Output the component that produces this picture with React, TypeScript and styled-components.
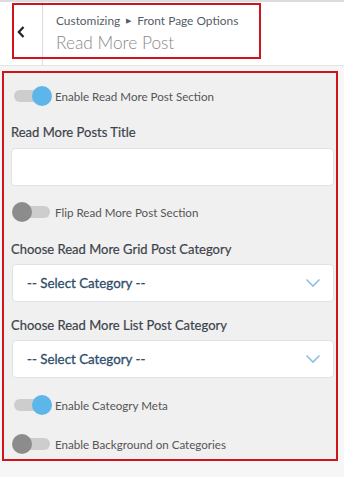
import styled, { createGlobalStyle } from 'styled-components';

const GlobalStyle = createGlobalStyle`
  html, body {
    margin: 0;
    padding: 0;
    background: #f6f6f6;
    font-family: Lato, "Open Sans", sans-serif;
  }
  * { box-sizing: border-box; }
`;

const Page = styled.div`
  width: 344px;
  height: 477px;
  border-top: 2px solid #dcdcde;
  overflow: hidden;
`;

const Header = styled.header`
  position: relative;
  display: flex;
  height: 64px;
  background: #fff;
  border-bottom: 1px solid #e4e4e4;
`;

const BackCell = styled.div`
  width: 43px;
  display: flex;
  align-items: center;
  justify-content: center;
  border-right: 1px solid #dcdcde;
  padding-bottom: 4px;
`;

const TitleBox = styled.div`
  padding: 9px 0 0 13px;
`;

const Crumb = styled.div`
  font-size: 11.9px;
  color: #555d66;
  line-height: 18px;
`;

const Sep = styled.span`
  font-size: 7px;
  margin: 0 6px;
  vertical-align: 2px;
`;

const Title = styled.div`
  font-size: 17.3px;
  font-weight: 300;
  color: #8a8a8a;
  line-height: 26px;
`;

const Highlight = styled.div`
  position: absolute;
  left: 12px;
  top: 1px;
  width: 249px;
  height: 56px;
  border: 2px solid #d0141b;
  pointer-events: none;
`;

const Panel = styled.section`
  margin: 5px 0 0 2px;
  width: 336px;
  height: 390px;
  border: 2px solid #d0141b;
  background: #f0f0f0;
  padding: 11px 2px 0 7px;
  display: flex;
  flex-direction: column;
`;

const ToggleRow = styled.div<{ $mt?: number }>`
  display: flex;
  align-items: center;
  height: 24px;
  margin-top: ${p => p.$mt ?? 0}px;
`;

const Switch = styled.div`
  position: relative;
  width: 42px;
  height: 24px;
  flex-shrink: 0;
`;

const Track = styled.div`
  position: absolute;
  left: 3px;
  top: 6px;
  width: 36px;
  height: 12px;
  border-radius: 6px;
  background: #cdcdcd;
`;

const Knob = styled.div<{ $on: boolean }>`
  position: absolute;
  top: 2px;
  left: ${p => (p.$on ? 21 : 1)}px;
  width: 20px;
  height: 20px;
  border-radius: 50%;
  background: ${p => (p.$on ? '#5cb6ea' : '#8c8c8c')};
`;

const ToggleLabel = styled.span`
  margin-left: 2px;
  font-size: 11.6px;
  color: #555;
`;

const FieldLabel = styled.div<{ $mt: number }>`
  margin-top: ${p => p.$mt}px;
  font-size: 13px;
  color: #3c434a;
  line-height: 18px;
  -webkit-text-stroke: 0.2px #3c434a;
`;

const TextInput = styled.div`
  margin-top: 7px;
  height: 38px;
  background: #fff;
  border: 1px solid #dde3e8;
  border-radius: 4px;
`;

const Select = styled.div`
  margin-top: 6px;
  margin-left: 1px;
  height: 38px;
  background: #fff;
  border: 1px solid #dde3e8;
  border-radius: 4px;
  display: flex;
  align-items: center;
  justify-content: space-between;
  padding: 0 12px 0 14px;
  font-size: 13.3px;
  color: #2e4d6b;
  -webkit-text-stroke: 0.3px #2e4d6b;
`;

function Toggle({ on, label, mt }: { on: boolean; label: string; mt?: number }) {
  return (
    <ToggleRow $mt={mt}>
      <Switch>
        <Track />
        <Knob $on={on} />
      </Switch>
      <ToggleLabel>{label}</ToggleLabel>
    </ToggleRow>
  );
}

function Chevron() {
  return (
    <svg width="16" height="10" viewBox="0 0 16 10">
      <path d="M1.5 1.5 L8 8 L14.5 1.5" fill="none" stroke="#8fbfe0" strokeWidth="1.6" />
    </svg>
  );
}

function CategorySelect() {
  return (
    <Select>
      <span>-- Select Category --</span>
      <Chevron />
    </Select>
  );
}

export default function App() {
  return (
    <Page>
      <GlobalStyle />
      <Header>
        <BackCell>
          <svg width="10" height="14" viewBox="0 0 10 14">
            <path d="M7.5 2 L2.8 7 L7.5 12" fill="none" stroke="#1d2327" strokeWidth="2.2" />
          </svg>
        </BackCell>
        <TitleBox>
          <Crumb>
            Customizing<Sep>▶</Sep>Front Page Options
          </Crumb>
          <Title>Read More Post</Title>
        </TitleBox>
        <Highlight />
      </Header>
      <Panel>
        <Toggle on label="Enable Read More Post Section" />
        <FieldLabel $mt={15}>Read More Posts Title</FieldLabel>
        <TextInput />
        <Toggle on={false} label="Flip Read More Post Section" mt={14} />
        <FieldLabel $mt={16}>Choose Read More Grid Post Category</FieldLabel>
        <CategorySelect />
        <FieldLabel $mt={14}>Choose Read More List Post Category</FieldLabel>
        <CategorySelect />
        <Toggle on label="Enable Cateogry Meta" mt={15} />
        <Toggle on={false} label="Enable Background on Categories" mt={15} />
      </Panel>
    </Page>
  );
}
